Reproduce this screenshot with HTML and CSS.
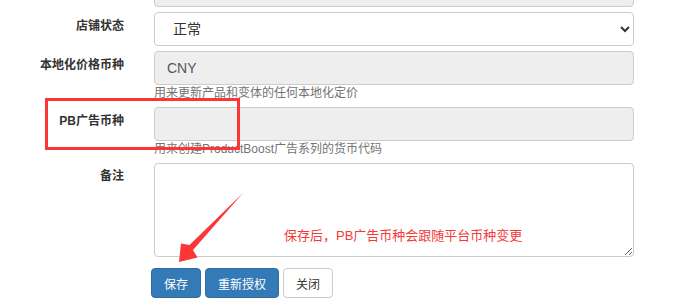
FILE: index.html
```html
<!DOCTYPE html>
<html>
	<head>
		<meta charset="utf-8">
		<title>店铺设置</title>
		<link rel="stylesheet" href="styles.css">
	</head>
	<body>
		<form class="shop-form">
			<div class="group group-cut">
				<span class="label"></span>
				<div class="field"><input class="control" type="text" disabled></div>
			</div>
			<div class="group">
				<label class="label">店铺状态</label>
				<div class="field">
					<select class="control">
						<option>正常</option>
						<option>停用</option>
					</select>
				</div>
			</div>
			<div class="group">
				<label class="label">本地化价格币种</label>
				<div class="field">
					<input class="control" type="text" value="CNY" disabled>
					<p class="help">用来更新产品和变体的任何本地化定价</p>
				</div>
			</div>
			<div class="group">
				<label class="label">PB广告币种</label>
				<div class="field">
					<input class="control" type="text" disabled>
					<p class="help">用来创建ProductBoost广告系列的货币代码</p>
				</div>
			</div>
			<div class="group">
				<label class="label label-note">备注</label>
				<div class="field"><textarea class="control note"></textarea></div>
			</div>
			<div class="group group-actions">
				<span class="label"></span>
				<div class="actions">
					<button type="button" class="btn btn-primary">保存</button>
					<button type="button" class="btn btn-primary">重新授权</button>
					<button type="button" class="btn btn-default">关闭</button>
				</div>
			</div>

			<!-- 标注 -->
			<div class="mark-box"></div>
			<svg class="mark-arrow" width="688" height="307" viewBox="0 0 688 307">
				<polygon points="243,193 189.5,245 181,243.5 179,262 197.5,257.5 193,250" fill="#fb3636"/>
			</svg>
			<div class="mark-text">保存后，PB广告币种会跟随平台币种变更</div>
		</form>
	</body>
</html>
```

FILE: styles.css
```css
*{
	margin: 0;padding: 0;
	box-sizing: border-box;
}
body{
	background: #fff;
	font-family: "Liberation Sans", "Noto Sans CJK SC", sans-serif;
	color: #333;
	overflow: hidden;
}
.shop-form{
	position: relative;
	width: 688px;
	height: 307px;
	overflow: hidden;
}
.group{
	display: grid;
	grid-template-columns: 124px 480px;
	column-gap: 30px;
	margin-bottom: 5px;
}
.group-cut{
	margin-top: -27px;
}
.label{
	font-size: 12px;
	font-weight: bold;
	line-height: 17px;
	padding-top: 6px;
	text-align: right;
	color: #333;
}
.label-note{
	padding-top: 5px;
}
.control{
	display: block;
	width: 480px;
	height: 34px;
	padding: 0 12px;
	font-family: inherit;
	font-size: 14px;
	color: #555;
	background: #fff;
	border: 1px solid #ccc;
	border-radius: 4px;
	outline: none;
}
.control:disabled{
	background: #eee;
	color: #555;
}
select.control{
	padding-left: 14px;
	color: #333;
}
.note{
	height: 94px;
	resize: vertical;
}
.help{
	font-size: 12px;
	line-height: 17px;
	color: #737373;
}
.group-actions{
	margin-top: 11px;
}
.actions{
	display: flex;
	gap: 4px;
	margin-left: -3px;
}
.btn{
	height: 30px;
	padding: 0 12px;
	font-family: inherit;
	font-size: 12px;
	border: 1px solid transparent;
	border-radius: 4px;
	cursor: pointer;
}
.btn-primary{
	background: #337ab7;
	border-color: #2e6da4;
	color: #fff;
}
.btn-default{
	background: #fff;
	border-color: #ccc;
	color: #333;
}
.mark-box{
	position: absolute;
	left: 45px;
	top: 98px;
	width: 195px;
	height: 52px;
	border: 3px solid #fb3636;
}
.mark-arrow{
	position: absolute;
	left: 0;
	top: 0;
	pointer-events: none;
}
.mark-text{
	position: absolute;
	left: 284px;
	top: 227px;
	font-size: 13px;
	line-height: 18px;
	color: #f23a3a;
}
```
